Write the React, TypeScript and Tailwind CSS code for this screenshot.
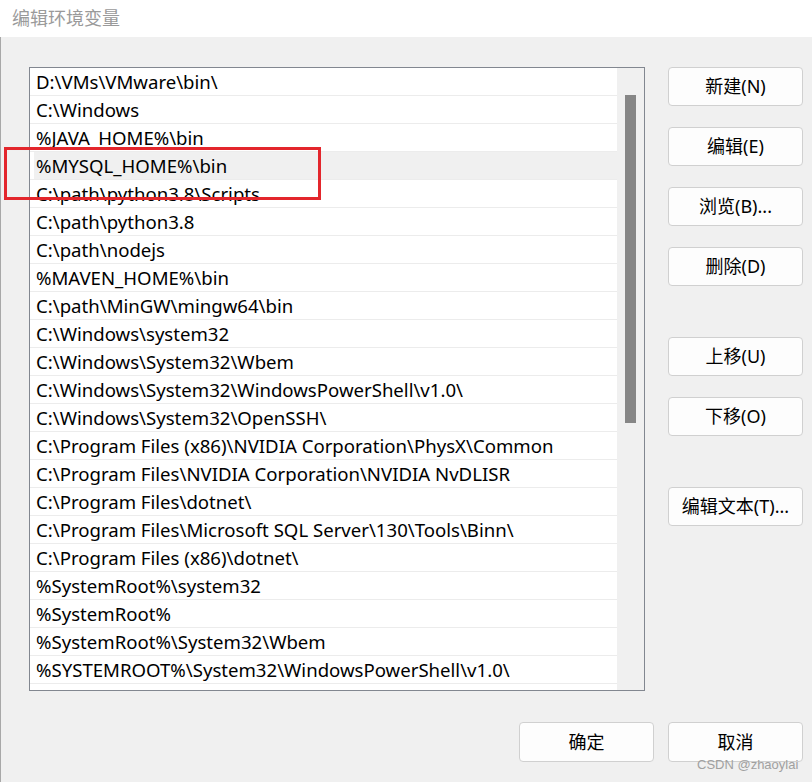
import React from "react";

const rows = [
  "D:\\VMs\\VMware\\bin\\",
  "C:\\Windows",
  "%JAVA_HOME%\\bin",
  "%MYSQL_HOME%\\bin",
  "C:\\path\\python3.8\\Scripts",
  "C:\\path\\python3.8",
  "C:\\path\\nodejs",
  "%MAVEN_HOME%\\bin",
  "C:\\path\\MinGW\\mingw64\\bin",
  "C:\\Windows\\system32",
  "C:\\Windows\\System32\\Wbem",
  "C:\\Windows\\System32\\WindowsPowerShell\\v1.0\\",
  "C:\\Windows\\System32\\OpenSSH\\",
  "C:\\Program Files (x86)\\NVIDIA Corporation\\PhysX\\Common",
  "C:\\Program Files\\NVIDIA Corporation\\NVIDIA NvDLISR",
  "C:\\Program Files\\dotnet\\",
  "C:\\Program Files\\Microsoft SQL Server\\130\\Tools\\Binn\\",
  "C:\\Program Files (x86)\\dotnet\\",
  "%SystemRoot%\\system32",
  "%SystemRoot%",
  "%SystemRoot%\\System32\\Wbem",
  "%SYSTEMROOT%\\System32\\WindowsPowerShell\\v1.0\\",
  "",
];

function Btn({ label, className = "" }: { label: string; className?: string }) {
  return (
    <button
      className={
        "w-[135px] h-[39px] bg-[#fdfdfd] border border-[#d0d0d0] rounded-[4px] text-[18px] text-black flex items-center justify-center " +
        className
      }
    >
      {label}
    </button>
  );
}

export default function App() {
  return (
    <div
      className="w-[812px] h-[782px] bg-[#f0f0f0] relative overflow-hidden"
      style={{ fontFamily: '"Noto Sans", "Noto Sans CJK SC", sans-serif' }}
    >
      <div className="h-[37px] bg-white flex items-center pl-[12px] text-[18px] text-[#9a9a9a]">
        编辑环境变量
      </div>
      <div className="h-[745px] border-l border-[#a8a8a8] flex flex-col">
        <div className="flex pt-[30px] pl-[28px]">
          <div className="w-[616px] h-[624px] border border-[#828790] bg-white flex overflow-hidden">
            <div className="w-[587px] flex flex-col">
              {rows.map((r, i) => (
                <div key={i} className="h-[28px] shrink-0 border-b border-[#ececec] flex">
                  <div
                    className={
                      "ml-[4px] pl-[2px] pt-[1px] flex-1 flex items-center text-[18.6px] text-black leading-none whitespace-nowrap " +
                      (i === 3 ? "bg-[#f0f0f0]" : "")
                    }
                  >
                    {r}
                  </div>
                </div>
              ))}
            </div>
            <div className="w-[27px] bg-[#f0f0f0] pl-[8px] pt-[27px]">
              <div className="w-[11px] h-[328px] bg-[#868686]" />
            </div>
          </div>
          <div className="ml-[23px] flex flex-col">
            <Btn label="新建(N)" />
            <Btn label="编辑(E)" className="mt-[21px]" />
            <Btn label="浏览(B)..." className="mt-[21px]" />
            <Btn label="删除(D)" className="mt-[21px]" />
            <Btn label="上移(U)" className="mt-[51px]" />
            <Btn label="下移(O)" className="mt-[21px]" />
            <Btn label="编辑文本(T)..." className="mt-[51px]" />
          </div>
        </div>
        <div className="flex justify-end gap-[14px] pr-[9px] mt-[31px]">
          <Btn label="确定" className="h-[40px]" />
          <Btn label="取消" className="h-[40px]" />
        </div>
      </div>
      <div className="absolute left-[4px] top-[147px] w-[317px] h-[53px] border-[3px] border-[#e3262c]" />
      <div
        className="absolute left-[697px] top-[758px] text-[13px] text-[#a0a0a0] leading-none whitespace-nowrap"
        style={{ fontFamily: '"Liberation Sans", Arial, sans-serif' }}
      >
        CSDN @zhaoylai
      </div>
    </div>
  );
}
